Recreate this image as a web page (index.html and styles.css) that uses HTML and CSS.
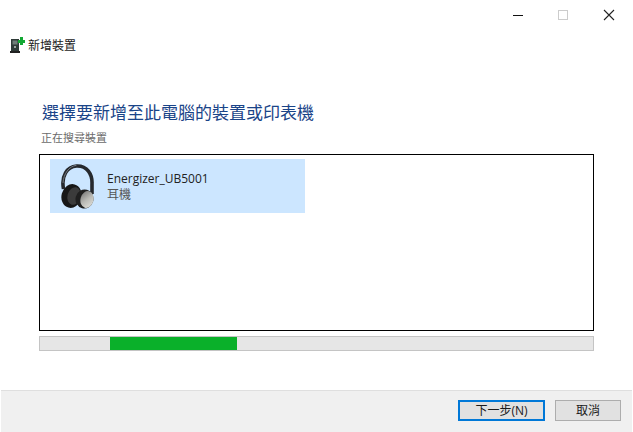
FILE: index.html
```html
<!DOCTYPE html>
<html lang="zh-Hant">
<head>
<meta charset="utf-8">
<title>新增裝置</title>
<link rel="stylesheet" href="styles.css">
</head>
<body>
<div class="window">
  <div class="titlebar">
    <svg class="ctl ctl-min" width="12" height="12" viewBox="0 0 12 12"><path d="M1 6.5h10" stroke="#111" stroke-width="1"/></svg>
    <svg class="ctl ctl-max" width="12" height="12" viewBox="0 0 12 12"><rect x="1.5" y="1.5" width="9" height="9" fill="none" stroke="#ccc"/></svg>
    <svg class="ctl ctl-close" width="12" height="12" viewBox="0 0 12 12"><path d="M1 1l10 10M11 1L1 11" stroke="#222" stroke-width="1.1"/></svg>
  </div>
  <div class="appline">
    <svg width="15" height="17" viewBox="0 0 15 17">
      <rect x="1" y="2" width="8" height="12" fill="#2f3b38"/>
      <rect x="2.500" y="3.500" width="5" height="4" fill="#6f7d78"/>
      <rect x="4" y="9" width="2" height="2" fill="#9aa5a1"/>
      <rect x="0" y="14" width="10" height="2" fill="#222"/>
      <path d="M10 0h3v3h2v3h-2v2h-3V6H8V3h2z" fill="#12a833"/>
    </svg>
    <span class="apptitle">新增裝置</span>
  </div>
  <main class="content">
    <h1 class="heading">選擇要新增至此電腦的裝置或印表機</h1>
    <p class="status">正在搜尋裝置</p>
    <div class="list">
      <div class="item">
        <svg class="hp" width="36" height="46" viewBox="0 0 36 46">
          <defs>
            <linearGradient id="cup" x1="0" y1="0" x2="1" y2="1">
              <stop offset="0" stop-color="#6e6e6e"/>
              <stop offset="0.5" stop-color="#b9b9b4"/>
              <stop offset="1" stop-color="#e6e6e0"/>
            </linearGradient>
          </defs>
          <path d="M3.500 26C1 13 7 3.500 16.500 3 27 2.500 32.500 11 32 21V31" fill="none" stroke="#26292d" stroke-width="3.600"/>
          <path d="M3 20C3.500 11 9 3 16.500 2.300" fill="none" stroke="#737981" stroke-width="1"/>
          <ellipse cx="11.500" cy="33" rx="10" ry="12" fill="#171717" transform="rotate(15 11.500 33)"/>
          <ellipse cx="14" cy="33" rx="6.500" ry="9" fill="#3b3b3b" transform="rotate(15 14 33)"/>
          <ellipse cx="24.500" cy="36" rx="9" ry="9.500" fill="#1f1f1f" transform="rotate(15 24.500 36)"/>
          <ellipse cx="27" cy="36.500" rx="6.500" ry="8.500" fill="url(#cup)" transform="rotate(15 27 36.500)"/>
        </svg>
        <div class="meta">
          <div class="name">Energizer_UB5001</div>
          <div class="kind">耳機</div>
        </div>
      </div>
    </div>
    <div class="progress"><div class="chunk"></div></div>
  </main>
  <footer class="footer">
    <button class="btn btn-default">下一步(N)</button>
    <button class="btn">取消</button>
  </footer>
</div>
</body>
</html>
```
FILE: styles.css
```css
* { box-sizing: border-box; }
html, body { margin: 0; padding: 0; background: #fff; }
body {
  font-family: "Open Sans", "Noto Sans CJK TC", sans-serif;
  font-size: 12px;
  color: #1a1a1a;
}
.window {
  width: 633px;
  height: 432px;
  display: flex;
  flex-direction: column;
  overflow: hidden;
}
.titlebar {
  height: 30px;
  display: flex;
  align-items: center;
  justify-content: flex-end;
  flex: none;
}
.ctl { flex: none; }
.ctl-min { margin-right: 33px; }
.ctl-max { margin-right: 34px; }
.ctl-close { margin-right: 18px; }
.appline {
  height: 17px;
  margin-top: 7px;
  padding-left: 10px;
  display: flex;
  align-items: center;
  gap: 3px;
  flex: none;
}
.apptitle {
  font-size: 12px;
  line-height: 17px;
}
.content {
  flex: 1;
  padding: 0 39px;
  display: flex;
  flex-direction: column;
}
.heading {
  margin: 47px 0 0 3px;
  font-size: 17px;
  line-height: 24px;
  font-weight: 400;
  color: #1a4488;
  white-space: nowrap;
}
.status {
  margin: 5px 0 0 2px;
  font-size: 11px;
  line-height: 15px;
  color: #6b6b6b;
}
.list {
  margin-top: 9px;
  height: 177px;
  border: 1px solid #000;
  padding: 4px 10px;
}
.item {
  width: 255px;
  height: 54px;
  background: #cce6ff;
  display: flex;
  align-items: center;
  padding-left: 10px;
  gap: 11px;
}
.hp { flex: none; }
.meta { line-height: 16px; padding-top: 2px; }
.name { height: 16px; font-size: 12px; color: #222; white-space: nowrap; }
.kind { height: 16px; font-size: 12px; color: #555; }
.progress {
  margin-top: 5px;
  height: 15px;
  background: #e6e6e6;
  border: 1px solid #c4c4c4;
  padding-left: 70px;
}
.chunk {
  width: 127px;
  height: 13px;
  background: #0ab02a;
}
.footer {
  flex: none;
  height: 42px;
  margin: 0 1px;
  background: #f0f0f0;
  border-top: 1px solid #dfdfdf;
  display: flex;
  justify-content: flex-end;
  align-items: flex-start;
  gap: 10px;
  padding: 9px 11px 0 0;
}
.btn {
  width: 66px;
  height: 21px;
  padding: 0;
  font: inherit;
  font-size: 12px;
  line-height: 17px;
  color: #1a1a1a;
  background: #e1e1e1;
  border: 1px solid #adadad;
}
.btn-default {
  width: 87px;
  border: 2px solid #0078d7;
  line-height: 15px;
}
```
